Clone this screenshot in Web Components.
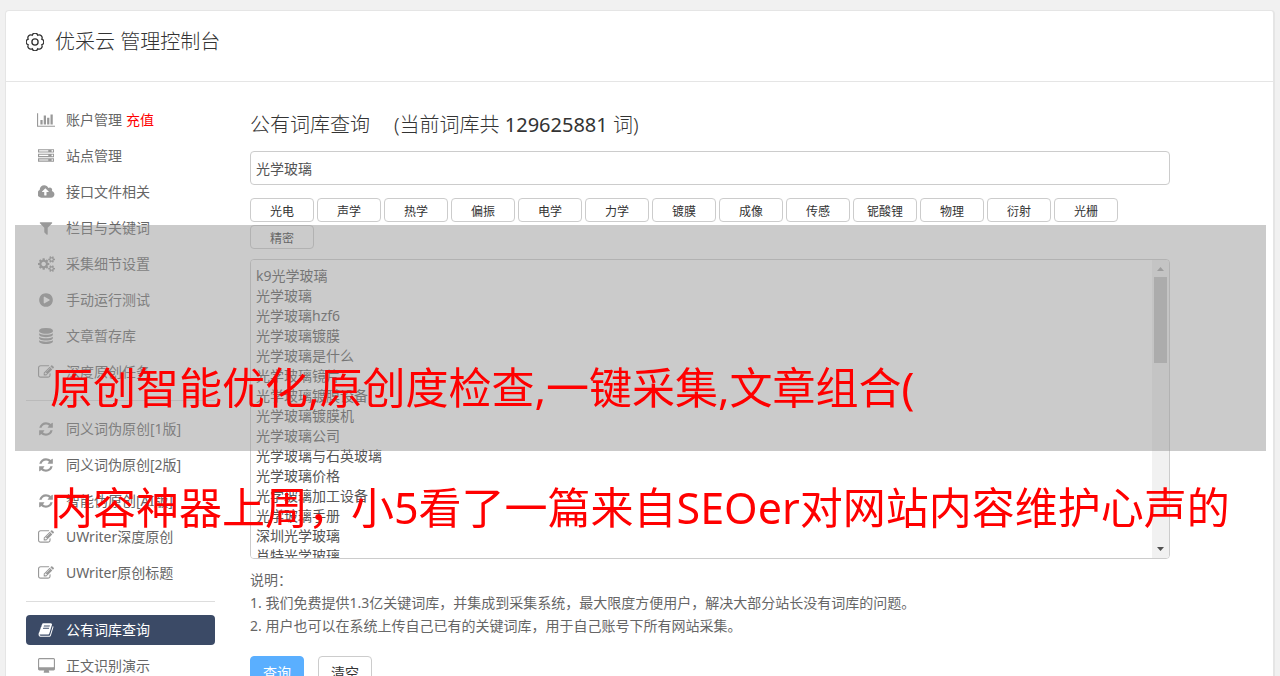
<!DOCTYPE html>
<html lang="zh-CN">
<head>
<meta charset="utf-8">
<title>优采云 管理控制台</title>
<style>
html { background: #f1f1f1; }
body {
  display: flow-root;
  margin: 0;
  position: relative;
  color: #666;
  font: 14px/20px "Noto Sans", "Noto Sans CJK SC", sans-serif;
}
</style>
</head>
<body>
<console-panel>
  <console-title slot="header">优采云 管理控制台</console-title>
  <side-menu slot="menu">
    <menu-item icon="chart">账户管理 <pay-link slot="extra">充值</pay-link></menu-item>
    <menu-item icon="server">站点管理</menu-item>
    <menu-item icon="cloud">接口文件相关</menu-item>
    <menu-item icon="filter">栏目与关键词</menu-item>
    <menu-item icon="cogs">采集细节设置</menu-item>
    <menu-item icon="play">手动运行测试</menu-item>
    <menu-item icon="database">文章暂存库</menu-item>
    <menu-item icon="edit">深度原创任务</menu-item>
    <menu-divider></menu-divider>
    <menu-item icon="refresh">同义词伪原创[1版]</menu-item>
    <menu-item icon="refresh">同义词伪原创[2版]</menu-item>
    <menu-item icon="refresh">智能伪原创[AI版]</menu-item>
    <menu-item icon="edit">UWriter深度原创</menu-item>
    <menu-item icon="edit">UWriter原创标题</menu-item>
    <menu-divider></menu-divider>
    <menu-item icon="book" active>公有词库查询</menu-item>
    <menu-item icon="desktop">正文识别演示</menu-item>
  </side-menu>
  <word-search></word-search>
</console-panel>
<promo-overlay>
  <span slot="first">原创智能优化,原创度检查,一键采集,文章组合(</span>
  <span slot="second">内容神器上周，小5看了一篇来自SEOer对网站内容维护心声的</span>
</promo-overlay>

<script>
const ICONS = {
  chart: [2048, "M640 896v512h-256v-512h256zm384-512v1024h-256v-1024h256zm1024 1152v128h-2048v-1536h128v1408h1920zm-640-896v768h-256v-768h256zm384-384v1152h-256v-1152h256z"],
  server: [1792, "M128 1408h1024v-128h-1024v128zm0-512h1024v-128h-1024v128zm1568 448q0-40-28-68t-68-28-68 28-28 68 28 68 68 28 68-28 28-68zm-1568-960h1024v-128h-1024v128zm1568 448q0-40-28-68t-68-28-68 28-28 68 28 68 68 28 68-28 28-68zm0-512q0-40-28-68t-68-28-68 28-28 68 28 68 68 28 68-28 28-68zm96 832v384h-1792v-384h1792zm0-512v384h-1792v-384h1792zm0-512v384h-1792v-384h1792z"],
  cloud: [1920, "M1216 864q0-14-9-23l-352-352q-9-9-23-9t-23 9l-351 351q-10 12-10 24 0 14 9 23t23 9h224v352q0 13 9.5 22.5t22.5 9.5h192q13 0 22.5-9.5t9.5-22.5v-352h224q13 0 22.5-9.5t9.5-22.5zm640 288q0 159-112.5 271.5t-271.5 112.5h-1088q-185 0-316.5-131.5t-131.5-316.5q0-130 70-240t188-165q-2-30-2-43 0-212 150-362t362-150q156 0 285.5 87t188.5 231q71-62 166-62 106 0 181 75t75 181q0 76-41 138 130 31 213.5 135.5t83.5 238.5z"],
  filter: [1792, "M1595 295q17 41-14 70l-493 493v742q0 42-39 59-13 5-25 5-27 0-45-19l-256-256q-19-19-19-45v-486l-493-493q-31-29-14-70 17-39 59-39h1280q42 0 59 39z"],
  cogs: [1920, "M896 896q0-106-75-181t-181-75-181 75-75 181 75 181 181 75 181-75 75-181zm768 512q0-52-38-90t-90-38-90 38-38 90q0 53 37.5 90.5t90.5 37.5 90.5-37.5 37.5-90.5zm0-1024q0-52-38-90t-90-38-90 38-38 90q0 53 37.5 90.5t90.5 37.5 90.5-37.5 37.5-90.5zm-384 421v185q0 10-7 19.5t-16 10.5l-155 24q-11 35-32 76 34 48 90 115 7 11 7 20 0 12-7 19-23 30-82.5 89.5t-78.5 59.5q-11 0-21-7l-115-90q-37 19-77 31-11 108-23 155-7 24-30 24h-186q-11 0-20-7.5t-10-17.5l-23-153q-34-10-75-31l-118 89q-7 7-20 7-11 0-21-8-144-133-144-160 0-9 7-19 10-14 41-53t47-61q-23-44-35-82l-152-24q-10-1-17-9.5t-7-19.5v-185q0-10 7-19.5t16-10.5l155-24q11-35 32-76-34-48-90-115-7-11-7-20 0-12 7-20 22-30 82-89t79-59q11 0 21 7l115 90q34-18 77-32 11-108 23-154 7-24 30-24h186q11 0 20 7.5t10 17.5l23 153q34 10 75 31l118-89q8-7 20-7 11 0 21 8 144 133 144 160 0 8-7 19-12 16-42 54t-45 60q23 48 34 82l152 23q10 2 17 10.5t7 19.5zm640 533v140q0 16-149 31-12 27-30 52 51 113 51 138 0 4-4 7-122 71-124 71-8 0-46-47t-52-68q-20 2-30 2t-30-2q-14 21-52 68t-46 47q-2 0-124-71-4-3-4-7 0-25 51-138-18-25-30-52-149-15-149-31v-140q0-16 149-31 13-29 30-52-51-113-51-138 0-4 4-7 4-2 35-20t59-34 30-16q8 0 46 46.5t52 67.5q20-2 30-2t30 2q51-71 92-112l6-2q4 0 124 70 4 3 4 7 0 25-51 138 17 23 30 52 149 15 149 31zm0-1024v140q0 16-149 31-12 27-30 52 51 113 51 138 0 4-4 7-122 71-124 71-8 0-46-47t-52-68q-20 2-30 2t-30-2q-14 21-52 68t-46 47q-2 0-124-71-4-3-4-7 0-25 51-138-18-25-30-52-149-15-149-31v-140q0-16 149-31 13-29 30-52-51-113-51-138 0-4 4-7 4-2 35-20t59-34 30-16q8 0 46 46.5t52 67.5q20-2 30-2t30 2q51-71 92-112l6-2q4 0 124 70 4 3 4 7 0 25-51 138 17 23 30 52 149 15 149 31z"],
  play: [1792, "M896 128q209 0 385.5 103t279.5 279.5 103 385.5-103 385.5-279.5 279.5-385.5 103-385.5-103-279.5-279.5-103-385.5 103-385.5 279.5-279.5 385.5-103zm384 823q32-18 32-55t-32-55l-544-320q-31-19-64-1-32 19-32 56v640q0 37 32 56 16 8 32 8 17 0 32-9z"],
  database: [1792, "M896 768q237 0 443-43t325-127v170q0 69-103 128t-280 93.5-385 34.5-385-34.5-280-93.5-103-128v-170q119 84 325 127t443 43zm0 768q237 0 443-43t325-127v170q0 69-103 128t-280 93.5-385 34.5-385-34.5-280-93.5-103-128v-170q119 84 325 127t443 43zm0-384q237 0 443-43t325-127v170q0 69-103 128t-280 93.5-385 34.5-385-34.5-280-93.5-103-128v-170q119 84 325 127t443 43zm0-1152q208 0 385 34.5t280 93.5 103 128v128q0 69-103 128t-280 93.5-385 34.5-385-34.5-280-93.5-103-128v-128q0-69 103-128t280-93.5 385-34.5z"],
  edit: [1792, "M888 1184l116-116-152-152-116 116v56h96v96h56zm440-720q-16-16-33 1l-350 350q-17 17-1 33t33-1l350-350q17-17 1-33zm80 594v190q0 119-84.5 203.5t-203.5 84.5h-832q-119 0-203.5-84.5t-84.5-203.5v-832q0-119 84.5-203.5t203.5-84.5h832q63 0 117 25 15 7 18 23 3 17-9 29l-49 49q-14 14-32 8-23-6-45-6h-832q-66 0-113 47t-47 113v832q0 66 47 113t113 47h832q66 0 113-47t47-113v-126q0-13 9-22l64-64q15-15 35-7t20 29zm-96-738l288 288-672 672h-288v-288zm444 132l-92 92-288-288 92-92q28-28 68-28t68 28l152 152q28 28 28 68t-28 68z"],
  refresh: [1792, "M1639 1056q0 5-1 7-64 268-268 434.5t-478 166.5q-146 0-282.5-55t-243.5-157l-129 129q-19 19-45 19t-45-19-19-45v-448q0-26 19-45t45-19h448q26 0 45 19t19 45-19 45l-137 137q71 66 161 102t187 36q134 0 250-65t186-179q11-17 53-117 8-23 30-23h192q13 0 22.5 9.5t9.5 22.5zm25-800v448q0 26-19 45t-45 19h-448q-26 0-45-19t-19-45 19-45l138-138q-148-137-349-137-134 0-250 65t-186 179q-11 17-53 117-8 23-30 23h-199q-13 0-22.5-9.5t-9.5-22.5v-7q65-268 270-434.5t480-166.5q146 0 284 55.5t245 156.5l130-129q19-19 45-19t45 19 19 45z"],
  book: [1792, "M1703 478q40 57 18 129l-275 906q-19 64-76.5 107.5t-122.5 43.5h-923q-77 0-148.5-53.5t-99.5-131.5q-24-67-2-127 0-4 3-27t4-37q1-8-3-21.5t-3-19.5q2-11 8-21t16.5-23.5 16.5-23.5q23-38 45-91.5t30-91.5q3-10 .5-30t-.5-28q3-11 17-28t17-23q21-36 42-92t25-90q1-9-2.5-32t.5-28q4-13 22-30.5t22-22.5q19-26 42.5-84.5t27.5-96.5q1-8-3-25.5t-2-26.5q2-8 9-18t18-23 17-21q8-12 16.5-30.5t15-35 16-36 19.5-32 26.5-23.5 36-11.5 47.5 5.5l-1 3q38-9 51-9h761q74 0 114 56t18 130l-274 906q-36 119-71.5 153.5t-128.5 34.5h-869q-27 0-38 15-11 16-1 43 24 70 144 70h923q29 0 56-15.5t35-41.5l300-987q7-22 5-57 38 15 59 43zm-1064 2q-4 13 2 22.5t20 9.5h608q13 0 25.5-9.5t16.5-22.5l21-64q4-13-2-22.5t-20-9.5h-608q-13 0-25.5 9.5t-16.5 22.5zm-83 256q-4 13 2 22.5t20 9.5h608q13 0 25.5-9.5t16.5-22.5l21-64q4-13-2-22.5t-20-9.5h-608q-13 0-25.5 9.5t-16.5 22.5z"],
  desktop: [1920, "M1792 992v-832q0-13-9.5-22.5t-22.5-9.5h-1600q-13 0-22.5 9.5t-9.5 22.5v832q0 13 9.5 22.5t22.5 9.5h1600q13 0 22.5-9.5t9.5-22.5zm128-832v1088q0 66-47 113t-113 47h-544q0 37 16 77.5t32 71 16 43.5q0 26-19 45t-45 19h-512q-26 0-45-19t-19-45q0-14 16-44t32-70 16-78h-544q-66 0-113-47t-47-113v-1088q0-66 47-113t113-47h1600q66 0 113 47t47 113z"]
};

function define(name, render) {
  customElements.define(name, class extends HTMLElement {
    constructor() {
      super();
      this.attachShadow({ mode: "open" });
    }
    connectedCallback() {
      this.shadowRoot.innerHTML = render(this);
    }
  });
}

define("console-panel", () => `
  <style>
    :host { display: block; margin: 10px 5px 0; padding-bottom: 20px; background: #fff; border: 1px solid #e5e5e5; border-right-width: 2px; border-radius: 4px; }
    header { padding: 15px 20px 24px; border-bottom: 1px solid #e5e5e5; }
    .body { display: flex; gap: 35px; padding: 23px 103px 0 20px; }
    nav { flex: 0 0 189px; }
    main { flex: 1; min-width: 0; }
  </style>
  <header><slot name="header"></slot></header>
  <div class="body">
    <nav><slot name="menu"></slot></nav>
    <main><slot></slot></main>
  </div>`);

define("console-title", () => {
  /* Scalloped gear rim: eight round lobes joined at the inner radius. */
  const pt = a => [9 + 7.3 * Math.sin(a), 9 - 7.3 * Math.cos(a)].map(v => v.toFixed(2)).join(" ");
  const step = Math.PI / 4, start = step / 2;
  let d = "M" + pt(start);
  for (let i = 1; i <= 8; i++) d += "A2.9 2.9 0 0 1 " + pt(start + i * step);
  return `
  <style>
    :host { display: block; color: #333; }
    h1 { display: flex; align-items: center; gap: 11px; margin: 0; font-size: 20px; font-weight: 300; line-height: 31px; }
    svg { width: 18px; height: 18px; fill: none; stroke: currentColor; stroke-width: 1.3; }
  </style>
  <h1><svg viewBox="0 0 18 18" aria-hidden="true"><path d="${d}z"/><circle cx="9" cy="9" r="3.1"/></svg><slot></slot></h1>`;
});

define("side-menu", () => `
  <style>
    :host { display: flex; flex-direction: column; gap: 6px; }
  </style>
  <slot></slot>`);

define("menu-divider", () => `
  <style>
    :host { display: block; margin: 7px 0; }
    hr { margin: 0; border: 0; border-top: 1px solid #ddd; }
  </style>
  <hr>`);

define("menu-item", el => {
  const [w, d] = ICONS[el.getAttribute("icon")];
  return `
  <style>
    :host { display: flex; align-items: center; height: 30px; border-radius: 4px; color: #666; }
    a { display: flex; align-items: center; gap: 10px; padding-left: 10px; color: inherit; text-decoration: none; }
    .icon { display: flex; justify-content: center; width: 20px; }
    svg { flex: none; height: 16px; fill: #999; }
    .extra { margin-left: 4px; }
    :host([active]) { background: #3b4a66; color: #fff; }
    :host([active]) svg { fill: #fff; }
  </style>
  <a href="#"><span class="icon"><svg viewBox="0 0 ${w} 1792" width="${Math.round(w / 112)}" aria-hidden="true"><path d="${d}"/></svg></span><span><slot></slot></span></a><span class="extra"><slot name="extra"></slot></span>`;
});

define("pay-link", () => `
  <style>
    :host { display: inline; }
    a { color: #f00; text-decoration: none; }
  </style>
  <a href="#"><slot></slot></a>`);

define("word-chip", () => `
  <style>
    :host { display: block; }
    button { width: 64px; height: 24px; padding: 4px 0 0; border: 1px solid #ccc; border-radius: 4px; background: #fff; color: #333; font: inherit; font-size: 12px; line-height: 18px; }
  </style>
  <button type="button"><slot></slot></button>`);

define("action-button", () => `
  <style>
    :host { display: block; }
    button { width: 54px; height: 34px; padding: 0; border: 1px solid #ccc; border-radius: 4px; background: #fff; color: #333; font: inherit; }
    :host([primary]) button { border-color: #5aafff; background: #5aafff; color: #fff; }
  </style>
  <button type="button"><slot></slot></button>`);

define("word-list", () => `
  <style>
    :host { display: flex; box-sizing: border-box; height: 300px; border: 1px solid #ccc; border-radius: 4px; overflow: hidden; }
    textarea { flex: 1; min-width: 0; box-sizing: border-box; padding: 6px 5px; border: 0; outline: 0; resize: none; background: #fff; color: #555; font: inherit; line-height: 20px; scrollbar-width: none; }
    .rail { display: flex; flex-direction: column; align-items: center; width: 17px; background: #f1f1f1; }
    .rail svg { width: 17px; height: 17px; flex: none; }
    .track { flex: 1; width: 13px; }
    .thumb { height: 86px; background: #c1c1c1; }
  </style>
  <textarea aria-label="词库结果">k9光学玻璃
光学玻璃
光学玻璃hzf6
光学玻璃镀膜
光学玻璃是什么
光学玻璃镜片
光学玻璃镀膜设备
光学玻璃镀膜机
光学玻璃公司
光学玻璃与石英玻璃
光学玻璃价格
光学玻璃加工设备
光学玻璃手册
深圳光学玻璃
肖特光学玻璃</textarea>
  <div class="rail" aria-hidden="true">
    <svg viewBox="0 0 17 17"><path d="M5 11l3.500-4 3.500 4z" fill="#a3a3a3"/></svg>
    <div class="track"><div class="thumb"></div></div>
    <svg viewBox="0 0 17 17"><path d="M5 6l3.500 4 3.500-4z" fill="#505050"/></svg>
  </div>`);

define("word-search", () => `
  <style>
    :host { display: block; }
    h2 { display: flex; gap: 24px; margin: 0; padding: 2px 0 9px; color: #333; font-size: 20px; font-weight: 300; line-height: 35px; }
    .count { font-weight: 400; }
    input { display: block; box-sizing: border-box; width: 100%; height: 34px; margin: 0 0 13px; padding: 0 5px; border: 1px solid #ccc; border-radius: 4px; background: #fff; color: #555; font: inherit; }
    .chips { display: flex; flex-wrap: wrap; gap: 3px; margin-bottom: 10px; }
    .notes { margin: 9px 0 19px; line-height: 23px; }
    .notes p { margin: 0; }
    .actions { display: flex; gap: 14px; }
  </style>
  <h2><label for="word">公有词库查询</label><span>(当前词库共 <span class="count">129625881</span> 词)</span></h2>
  <input id="word" type="text" value="光学玻璃">
  <div class="chips">${"光电 声学 热学 偏振 电学 力学 镀膜 成像 传感 铌酸锂 物理 衍射 光栅 精密".split(" ").map(w => `<word-chip>${w}</word-chip>`).join("")}</div>
  <word-list></word-list>
  <div class="notes">
    <p>说明：</p>
    <p>1. 我们免费提供1.3亿关键词库，并集成到采集系统，最大限度方便用户，解决大部分站长没有词库的问题。</p>
    <p>2. 用户也可以在系统上传自己已有的关键词库，用于自己账号下所有网站采集。</p>
  </div>
  <div class="actions"><action-button primary>查询</action-button><action-button>清空</action-button></div>`);

/* Translucent band that floats over the console, its second line running below the band. */
define("promo-overlay", () => `
  <style>
    :host { position: absolute; top: 225px; left: 15px; right: 14px; box-sizing: border-box; height: 226px; padding: 103px 0 0 35px; background: rgba(151, 151, 151, .5); color: #f00; font-size: 43px; line-height: 120px; white-space: nowrap; pointer-events: none; }
    div { height: 120px; }
  </style>
  <div><slot name="first"></slot></div>
  <div><slot name="second"></slot></div>`);
</script>
</body>
</html>
